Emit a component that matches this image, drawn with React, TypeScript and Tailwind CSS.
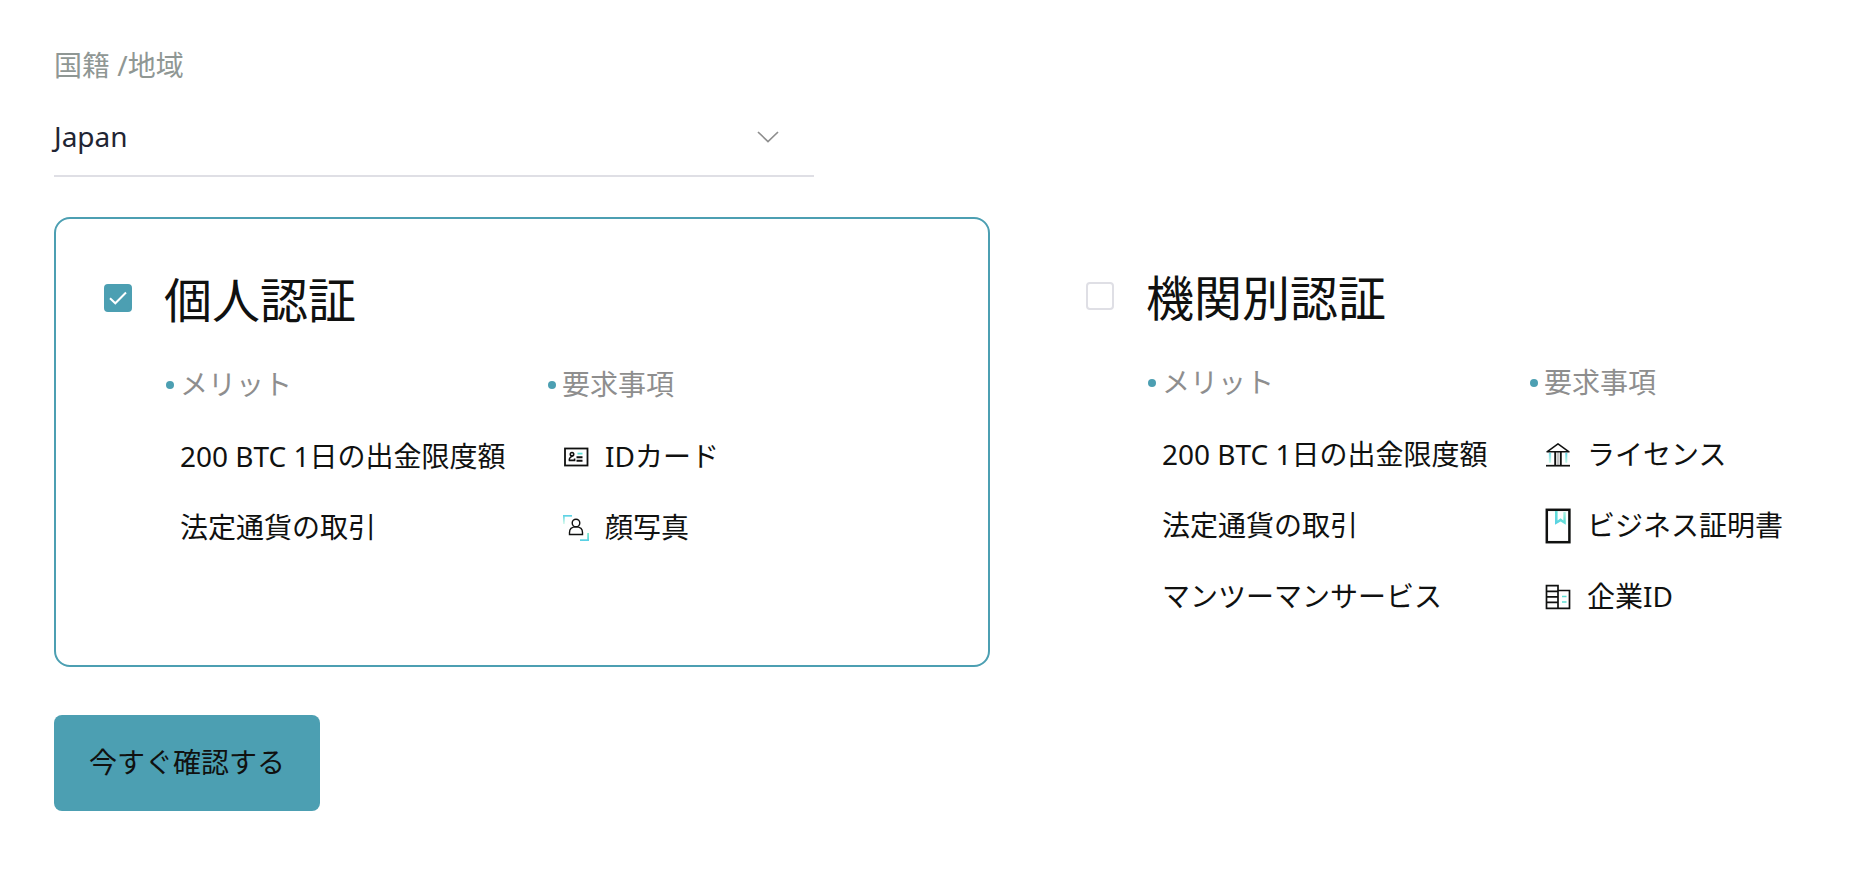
import { useState, type ReactNode } from 'react'

interface Requirement {
  label: string
  icon: ReactNode
}

interface Plan {
  key: string
  title: string
  benefits: string[]
  requirements: Requirement[]
}

const COUNTRIES = ['Japan', 'Singapore', 'South Korea', 'Taiwan']

function IdCardIcon() {
  return (
    <svg width="28" height="28" viewBox="0 0 28 28" fill="none" stroke="#101110" strokeWidth="1.8" aria-hidden="true">
      <rect x="3" y="5.5" width="22.5" height="17" />
      <circle cx="10" cy="11.2" r="1.7" strokeWidth="1.6" />
      <path d="M10.6 13C8.4 13.8 6.9 15.8 7.4 17.4H12.6V15.4" strokeWidth="1.6" />
      <path d="M15.5 10.6H20.5" stroke="#5fdfd5" />
      <path d="M14.5 14.2H20.5M14.5 17.8H20.5" strokeWidth="1.9" />
    </svg>
  )
}

function FaceIcon() {
  return (
    <svg width="28" height="28" viewBox="0 0 28 28" fill="none" aria-hidden="true">
      <defs>
        <linearGradient id="face-a" x1="0" y1="0" x2="0" y2="1">
          <stop stopColor="#57cfe6" />
          <stop offset="1" stopColor="#7beacb" stopOpacity=".3" />
        </linearGradient>
        <linearGradient id="face-b" x1="0" y1="1" x2="0" y2="0">
          <stop stopColor="#57cfe6" />
          <stop offset="1" stopColor="#7beacb" />
        </linearGradient>
      </defs>
      <path d="M1 10V1H10V2.8H2.8V10Z" fill="url(#face-a)" />
      <path d="M27 19V27H18V25.2H25.2V19Z" fill="url(#face-b)" />
      <circle cx="14" cy="9" r="3.8" stroke="#101110" strokeWidth="1.4" />
      <path d="M7.5 20.5V18.5C7.5 15 10 12.9 14 12.9S20.5 15 20.5 18.5V20.5Z" stroke="#101110" strokeWidth="1.4" />
    </svg>
  )
}

function BankIcon() {
  return (
    <svg width="28" height="28" viewBox="0 0 28 28" fill="none" stroke="#101110" strokeWidth="1.5" aria-hidden="true">
      <defs>
        <linearGradient id="bank" x1="0" y1="11" x2="0" y2="22" gradientUnits="userSpaceOnUse">
          <stop stopColor="#57cfe6" />
          <stop offset="1" stopColor="#7beacb" stopOpacity=".4" />
        </linearGradient>
      </defs>
      <path d="M14 2.8L25 10.8H3Z" strokeLinejoin="round" />
      <path d="M11.2 11V24M16.8 11V24" strokeWidth="1.9" />
      <path d="M14 11V24" strokeWidth=".5" />
      <path d="M2 24.7H26" strokeWidth="1.7" />
      <path d="M5.2 12H6.8V21.5H5.2ZM21.5 12H23.1V21.5H21.5Z" fill="url(#bank)" stroke="url(#bank)" strokeWidth=".4" />
    </svg>
  )
}

function CertificateIcon() {
  return (
    <svg width="28" height="36" viewBox="0 0 28 36" fill="none" aria-hidden="true">
      <defs>
        <linearGradient id="mark" x1="0" y1="1" x2="1" y2="0">
          <stop stopColor="#57cfe6" />
          <stop offset=".6" stopColor="#66e0d6" />
          <stop offset="1" stopColor="#7beacb" stopOpacity=".5" />
        </linearGradient>
      </defs>
      <rect x="2.8" y="1.8" width="22.6" height="32.4" stroke="#101110" strokeWidth="2.5" />
      <path d="M11 3H13.6V12.4L16.6 10.2L19.4 12.4V4H21.8V16.8L16.6 13.4L11 16.8Z" fill="url(#mark)" />
    </svg>
  )
}

function BuildingIcon() {
  return (
    <svg width="28" height="28" viewBox="0 0 28 28" fill="none" stroke="#101110" strokeWidth="1.7" aria-hidden="true">
      <path d="M2.5 2.7H14V25.3H2.5ZM14 7.5H25.5V25.3H14M2.5 8.3H14M2.5 13.8H14M2.5 19.3H14" />
      <path d="M18 13.5H22.5M18 19H22.5" stroke="#5fdfd5" />
    </svg>
  )
}

const PLANS: Plan[] = [
  {
    key: 'personal',
    title: '個人認証',
    benefits: ['200 BTC 1日の出金限度額', '法定通貨の取引'],
    requirements: [
      { label: 'IDカード', icon: <IdCardIcon /> },
      { label: '顔写真', icon: <FaceIcon /> },
    ],
  },
  {
    key: 'institution',
    title: '機関別認証',
    benefits: ['200 BTC 1日の出金限度額', '法定通貨の取引', 'マンツーマンサービス'],
    requirements: [
      { label: 'ライセンス', icon: <BankIcon /> },
      { label: 'ビジネス証明書', icon: <CertificateIcon /> },
      { label: '企業ID', icon: <BuildingIcon /> },
    ],
  },
]

function ColumnTitle({ children }: { children: ReactNode }) {
  return (
    <h3 className="flex items-center text-[#8e8e8e]">
      <span className="w-4 shrink-0 pl-0.5">
        <span className="block size-2 rounded-full bg-[#4c9fb2]" />
      </span>
      {children}
    </h3>
  )
}

interface PlanCardProps {
  plan: Plan
  selected: boolean
  onSelect: () => void
}

function PlanCard({ plan, selected, onSelect }: PlanCardProps) {
  return (
    <section
      className={`flex items-start gap-8 rounded-2xl p-12 ${selected ? 'border-2 border-[#4c9fb2]' : ''}`}
    >
      <span className="relative mt-[17px] size-7 shrink-0">
        <input
          id={plan.key}
          type="checkbox"
          checked={selected}
          onChange={onSelect}
          className="block size-7 cursor-pointer appearance-none rounded border-2 border-[#dfdfe5] checked:border-[#4c9fb2] checked:bg-[#4c9fb2]"
        />
        {selected && (
          <svg className="pointer-events-none absolute inset-0" width="28" height="28" viewBox="0 0 28 28" fill="none" stroke="#fff" strokeWidth="2" aria-hidden="true">
            <path d="M6 14.3L11.3 19.3L22 8.5" />
          </svg>
        )}
      </span>
      <div className="min-w-0 flex-1">
        <h2 className="text-[48px] leading-[66px]">
          <label htmlFor={plan.key} className="cursor-pointer">{plan.title}</label>
        </h2>
        <div className="mt-[31px] flex whitespace-nowrap leading-[41px]">
          <div className="w-[382px] shrink-0">
            <ColumnTitle>メリット</ColumnTitle>
            <ul className="mt-[31px] flex flex-col gap-[30px] pl-4">
              {plan.benefits.map((benefit) => (
                <li key={benefit}>{benefit}</li>
              ))}
            </ul>
          </div>
          <div>
            <ColumnTitle>要求事項</ColumnTitle>
            <ul className="mt-[31px] flex flex-col gap-[30px] pl-4">
              {plan.requirements.map((item) => (
                <li key={item.label} className="flex items-center gap-[15px]">
                  {item.icon}
                  {item.label}
                </li>
              ))}
            </ul>
          </div>
        </div>
      </div>
    </section>
  )
}

export default function App() {
  const [country, setCountry] = useState('Japan')
  const [selected, setSelected] = useState('personal')

  return (
    <main className="min-h-screen bg-white pt-[45px] pb-12 pl-[54px] font-['Noto_Sans','Noto_Sans_CJK_JP',sans-serif] text-[28px] text-[#101110]" lang="ja">
      <label htmlFor="country" className="block leading-[41px] text-[#8f9794]">国籍 /地域</label>
      <div className="relative mt-5 w-[760px] max-w-full border-b-2 border-[#dfdfe5]">
        <select
          id="country"
          value={country}
          onChange={(e) => setCountry(e.target.value)}
          className="-ml-1 block h-[69px] w-full appearance-none bg-transparent pr-16 pb-2.5 indent-1 text-[#1f2533] outline-none"
        >
          {COUNTRIES.map((name) => (
            <option key={name}>{name}</option>
          ))}
        </select>
        <svg className="pointer-events-none absolute top-[25px] right-[35px]" width="22" height="12" viewBox="0 0 22 12" fill="none" stroke="#8e8e8e" strokeWidth="1.7" aria-hidden="true">
          <path d="M1 1L11 10.5L21 1" />
        </svg>
      </div>

      <div className="mt-10 grid min-h-[450px] grid-cols-[936fr_838fr] gap-12">
        {PLANS.map((plan) => (
          <PlanCard key={plan.key} plan={plan} selected={selected === plan.key} onSelect={() => setSelected(plan.key)} />
        ))}
      </div>

      <button type="button" className="mt-12 block h-24 cursor-pointer rounded-lg bg-[#4c9fb2] px-[35px] pb-0.5">
        今すぐ確認する
      </button>
    </main>
  )
}
